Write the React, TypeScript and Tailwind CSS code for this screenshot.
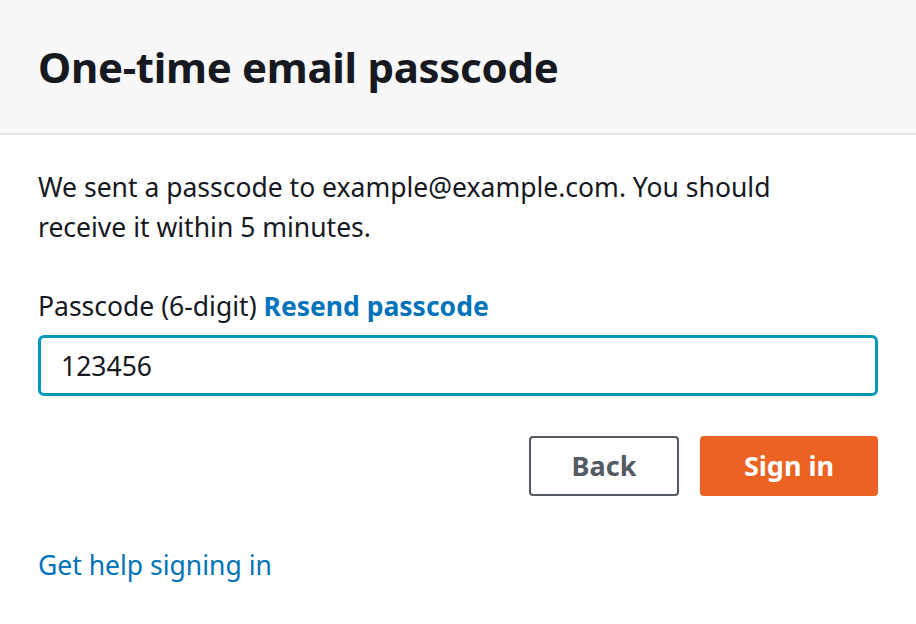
import React, { useState } from "react";

const App = () => {
  const [code, setCode] = useState("123456");

  return (
    <div className="w-[916px] h-[624px] bg-white font-['Noto_Sans',sans-serif] text-[#16191f]">
      <div className="h-[135px] bg-[#f8f8f8] border-b-2 border-[#e5e7e6] px-[38px] flex items-center">
        <h1 className="text-[42px] font-bold tracking-[-0.3px]">One-time email passcode</h1>
      </div>
      <div className="px-[38px] pt-[32px]">
        <p className="text-[26.5px] leading-[40px] pr-[80px]">
          We sent a passcode to example@example.com. You should receive it within 5 minutes.
        </p>
        <div className="mt-[43px] text-[26.5px] leading-[32px]">
          Passcode (6-digit){" "}
          <a href="#" className="font-bold text-[#0073bb]">
            Resend passcode
          </a>
        </div>
        <input
          autoFocus
          value={code}
          onChange={(e) => setCode(e.target.value)}
          className="mt-[13px] w-full h-[61px] border-[3px] border-[#0099bb] rounded-[6px] px-[20px] text-[26.5px] outline-none caret-black"
        />
        <div className="mt-[40px] flex justify-end gap-[21px]">
          <button className="w-[150px] h-[60px] border-2 border-[#545b64] rounded-[4px] text-[27px] font-bold text-[#545b64]">
            Back
          </button>
          <button className="w-[178px] h-[60px] bg-[#ec6222] rounded-[4px] text-[27px] font-bold text-white">
            Sign in
          </button>
        </div>
        <a href="#" className="block mt-[50px] text-[26.5px] text-[#0073bb]">
          Get help signing in
        </a>
      </div>
    </div>
  );
};

export default App;
